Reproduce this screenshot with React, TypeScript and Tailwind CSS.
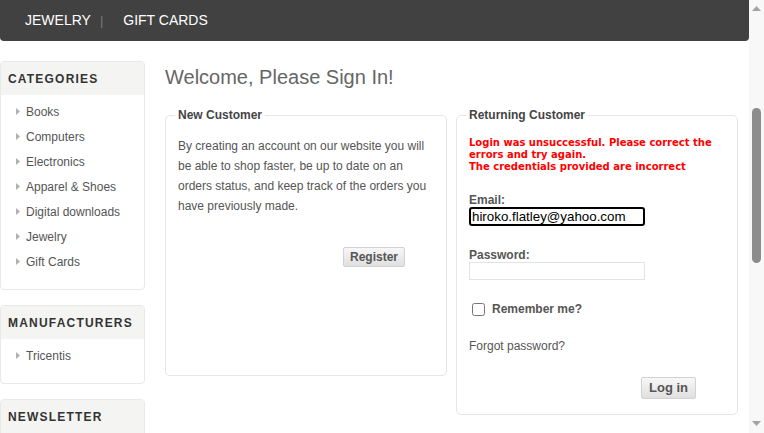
import React from "react";

const categories = [
  "Books",
  "Computers",
  "Electronics",
  "Apparel & Shoes",
  "Digital downloads",
  "Jewelry",
  "Gift Cards",
];

function Arrow() {
  return (
    <svg className="w-[4px] h-[7px] shrink-0" viewBox="0 0 4 7">
      <path d="M0 0 L4 3.5 L0 7 Z" fill="#b0b0b0" />
    </svg>
  );
}

function SideBlock({
  title,
  items,
  className,
}: {
  title: string;
  items?: string[];
  className?: string;
}) {
  return (
    <div
      className={`border border-[#e9e9e9] rounded-[4px] overflow-hidden shrink-0 ${className ?? ""}`}
    >
      <div className="h-[33px] bg-[#f4f4f2] flex items-center px-[7px] text-[12px] font-bold tracking-[1.2px] text-[#333]">
        {title}
      </div>
      {items && (
        <ul className="pt-[4px] pb-[15px]">
          {items.map((item) => (
            <li
              key={item}
              className="h-[25px] flex items-center gap-[6px] pl-[15px] text-[12px] text-[#555]"
            >
              <Arrow />
              <span>{item}</span>
            </li>
          ))}
        </ul>
      )}
    </div>
  );
}

export default function App() {
  return (
    <div className="w-[764px] h-[433px] overflow-hidden bg-white flex font-['Liberation_Sans',Arial,sans-serif]">
      <div className="w-[749px] flex flex-col">
        {/* Top menu */}
        <div className="h-[41px] shrink-0 bg-[#414141] rounded-b-[4px] flex items-center pl-[25px] text-[14px] text-white">
          <span>JEWELRY</span>
          <span className="mx-[9px] text-[#7a7a7a] text-[13px]">|</span>
          <span className="ml-[11px]">GIFT CARDS</span>
        </div>

        <div className="flex gap-[20px] pt-[20px] shrink-0">
          {/* Sidebar */}
          <div className="w-[145px] shrink-0 flex flex-col gap-[15px]">
            <SideBlock title="CATEGORIES" items={categories} />
            <SideBlock title="MANUFACTURERS" items={["Tricentis"]} />
            <SideBlock title="NEWSLETTER" className="h-[60px]" />
          </div>

          {/* Main */}
          <div className="flex-1 pr-[11px]">
            <h1 className="text-[20px] leading-[24px] text-[#666] mt-[4px]">
              Welcome, Please Sign In!
            </h1>

            <div className="flex gap-[9px] items-start mt-[19px]">
              <fieldset className="w-[282px] h-[268px] border border-[#e6e6e6] rounded-[5px] px-[12px] pt-[14px]">
                <legend className="-ml-[3px] px-[3px] text-[12px] leading-[14px] font-bold text-[#444]">
                  New Customer
                </legend>
                <p className="text-[12px] leading-[20px] text-[#555]">
                  By creating an account on our website you will be able to shop
                  faster, be up to date on an orders status, and keep track of the
                  orders you have previously made.
                </p>
                <div className="flex justify-end pr-[29px] mt-[31px]">
                  <button className="h-[20px] px-[6px] border border-[#d2d2d2] rounded-[2px] bg-gradient-to-b from-[#f7f7f7] to-[#e0e0e0] text-[12px] font-bold text-[#555]">
                    Register
                  </button>
                </div>
              </fieldset>

              <fieldset className="w-[282px] h-[307px] border border-[#e6e6e6] rounded-[5px] px-[12px] pt-[15px]">
                <legend className="-ml-[3px] px-[3px] text-[12px] leading-[14px] font-bold text-[#444]">
                  Returning Customer
                </legend>
                <div className="font-['DejaVu_Sans',Verdana,sans-serif] text-[10px] leading-[12px] font-bold text-[#ff0000]">
                  <p>Login was unsuccessful. Please correct the errors and try again.</p>
                  <p>The credentials provided are incorrect</p>
                </div>

                <div className="mt-[20px] text-[12px] leading-[14px] font-bold text-[#555]">
                  Email:
                </div>
                <input
                  readOnly
                  value="hiroko.flatley@yahoo.com"
                  className="block w-[176px] h-[19px] border-2 border-black rounded-[3px] px-[1px] text-[13.333px] text-black outline-none"
                />

                <div className="mt-[22px] text-[12px] leading-[14px] font-bold text-[#555]">
                  Password:
                </div>
                <input
                  readOnly
                  type="password"
                  className="block w-[176px] h-[18px] border border-[#e3e3e3] outline-none"
                />

                <label className="flex items-center gap-[7px] mt-[20px] pl-[3px] text-[12px] font-bold text-[#555]">
                  <input type="checkbox" className="w-[13px] h-[13px] m-0" />
                  Remember me?
                </label>

                <div className="mt-[19px] text-[12px] text-[#555]">Forgot password?</div>

                <div className="flex justify-end pr-[29px] mt-[22px]">
                  <button className="h-[22px] px-[7px] border border-[#d2d2d2] rounded-[2px] bg-gradient-to-b from-[#f7f7f7] to-[#e0e0e0] text-[13px] font-bold text-[#555]">
                    Log in
                  </button>
                </div>
              </fieldset>
            </div>
          </div>
        </div>
      </div>

      {/* Scrollbar */}
      <div className="w-[15px] bg-[#f8f8f8] flex flex-col items-center">
        <svg className="w-[9px] h-[5px] mt-[6px]" viewBox="0 0 9 5">
          <path d="M0 5 L4.5 0 L9 5 Z" fill="#a3a3a3" />
        </svg>
        <div className="w-[9px] h-[155px] mt-[97px] rounded-full bg-[#8c8c8c]" />
        <div className="flex-1" />
        <svg className="w-[9px] h-[5px] mb-[7px]" viewBox="0 0 9 5">
          <path d="M0 0 L9 0 L4.5 5 Z" fill="#a3a3a3" />
        </svg>
      </div>
    </div>
  );
}
